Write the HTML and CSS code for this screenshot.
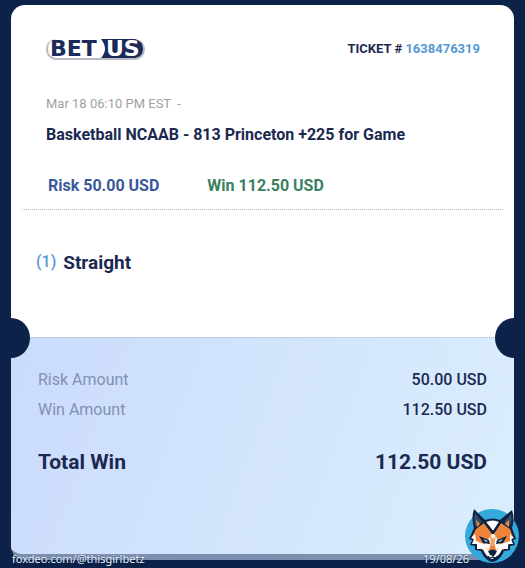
FILE: index.html
```html
<!DOCTYPE html>
<html lang="en">
<head>
<meta charset="utf-8">
<meta name="viewport" content="width=device-width, initial-scale=1">
<title>Ticket 1638476319</title>
<link rel="stylesheet" href="styles.css">
</head>
<body>
<main class="page">
  <article class="ticket">
    <section class="bet">
      <header class="top">
        <svg class="logo" width="100" height="24" viewBox="0 0 100 24" role="img" aria-label="BETUS">
          <path d="M9 2H90Q99 4 99 13Q98 21 90 23H9Q0 21 0 12Q0 4 9 2Z" fill="#b9bcc4"/>
          <path d="M10 2H89Q97 4 97 12Q97 20 89 21H10Q2 20 2 12Q2 4 10 2Z" fill="#fff"/>
          <path d="M55 2H89Q97 4 97 12Q97 20 89 21H55Q63 12 55 2Z" fill="#1b2a58"/>
          <text class="logo-word" x="4" y="19" fill="#1b2a58">BET</text>
          <text class="logo-word" x="60" y="19" fill="#fff">US</text>
        </svg>
        <p class="number">TICKET # <span class="blue">1638476319</span></p>
      </header>
      <p class="date">Mar 18 06:10 PM EST &nbsp;-</p>
      <h1 class="title">Basketball NCAAB - 813 Princeton +225 for Game</h1>
      <p class="stakes"><span class="risk">Risk 50.00 USD</span><span class="win">Win 112.50 USD</span></p>
    </section>
    <section class="kind">
      <span class="count">(1)</span>
      <h2 class="kind-name">Straight</h2>
    </section>
    <section class="summary">
      <dl class="amounts">
        <div class="row"><dt>Risk Amount</dt><dd>50.00 USD</dd></div>
        <div class="row"><dt>Win Amount</dt><dd>112.50 USD</dd></div>
        <div class="row total"><dt>Total Win</dt><dd>112.50 USD</dd></div>
      </dl>
    </section>
  </article>
  <footer class="credit">
    <span>foxdeo.com/@thisgirlbetz</span>
    <span class="stamp">19/08/26</span>
  </footer>
  <svg class="fox" viewBox="0 0 56 56" role="img" aria-label="Fox">
    <circle cx="28" cy="28" r="27" fill="#35a8dc"/>
    <path d="M10 1L21 12Q29 9 36 12L48 2Q51 11 48 20L52 31L49 32L51 37L46 38L46 42L40 43Q38 49 32 53L28 54L25 53Q19 49 17 43L11 42V38L6 37L8 32L5 31L10 20Q7 10 10 1Z" fill="#10213f"/>
    <path d="M11 5L18 14L12 19Q9 12 11 5ZM47 6L40 14L45 19Q49 13 47 6Z" fill="#334d6b"/>
    <path d="M12 12L16 16L13 19ZM45 12L41 16L45 19Z" fill="#ee8a3b"/>
    <path d="M22 14Q29 11 35 14L29 23Z" fill="#fff"/>
    <path d="M20 15L29 27L37 15L46 21L49 29L43 40L36 43L29 49L21 43L15 40L8 29L12 21Z" fill="#ed8439"/>
    <path d="M20 15L22 14L29 23L35 14L37 15L29 27Z" fill="#10213f"/>
    <path d="M11 26L7 30L10 31L8 36L13 36L13 41L19 41Q21 48 28 51Q36 48 38 41L44 41L44 36L49 36L47 31L50 30L46 26L46 33L37 36L33 42H24L20 36L12 33Z" fill="#fff"/>
    <path d="M28 26L24 32L20 37L25 42L27 34H30L32 42L37 37L34 32L30 26Z" fill="#fff"/>
    <path d="M26 27L29 31L32 27L30 38H27Z" fill="#f5a157"/>
    <path d="M15 28L25 32L26 36L19 35ZM43 28L33 32L32 36L39 35Z" fill="#10213f"/>
    <path d="M19 31L24 33L22 34ZM39 31L34 33L36 34Z" fill="#a8dff7"/>
    <path d="M24 43Q29 40 33 43L31 47L29 48L26 47Z" fill="#10213f"/>
    <path d="M29 47V50M24 48Q26 51 29 49Q31 51 34 48" fill="none" stroke="#10213f"/>
  </svg>
</main>
</body>
</html>
```
FILE: styles.css
```css
* {
  box-sizing: border-box;
}

body,
p,
h1,
h2,
dl,
dd {
  margin: 0;
}

body {
  background: #0d2248;
  color: #1b2951;
  font-family: Roboto, "Liberation Sans", sans-serif;
}

.page {
  position: relative;
  display: flex;
  flex-direction: column;
  min-height: 100vh;
  padding: 5px 11px 0;
}

.ticket {
  flex: 1;
  display: flex;
  flex-direction: column;
  overflow: hidden;
  border-radius: 14px;
  border-bottom: 6px solid #7d8fae;
  background: #fff;
}

.bet {
  margin: 0 11px;
  padding: 32px 23px 13px 24px;
  border-bottom: 1px dotted #b4b5b9;
}

.top {
  display: flex;
  justify-content: space-between;
  align-items: center;
}

.logo-word {
  font: bold 22px "DejaVu Sans", sans-serif;
}

.number {
  font-size: 13px;
  font-weight: 700;
  line-height: 24px;
}

.blue,
.count {
  color: #5499d3;
}

.date {
  margin-top: 33px;
  color: #a1a1a3;
  font-size: 13px;
  line-height: 20px;
}

.title {
  margin-top: 11px;
  font-size: 16px;
  font-weight: 700;
  line-height: 20px;
}

.stakes {
  display: flex;
  gap: 48px;
  margin-top: 31px;
  padding-left: 2px;
  font-size: 16px;
  font-weight: 700;
  line-height: 20px;
}

.risk {
  color: #38589b;
}

.win {
  color: #3a805f;
}

.kind {
  display: flex;
  gap: 7px;
  height: 127px;
  padding: 40px 25px;
}

.count {
  font-size: 16px;
  font-weight: 500;
  line-height: 24px;
}

.kind-name {
  font-size: 19px;
  font-weight: 700;
  line-height: 26px;
}

.summary {
  position: relative;
  flex: 1;
  padding: 27px;
  border-top: 1px dotted #b0b8c8;
  background: linear-gradient(110deg, #cbdbfc, #dbeefd);
}

.summary::before,
.summary::after {
  content: "";
  position: absolute;
  top: -20px;
  width: 38px;
  height: 40px;
  border-radius: 50%;
  background: #0d2248;
}

.summary::before {
  left: -19px;
}

.summary::after {
  right: -19px;
}

.row {
  display: flex;
  justify-content: space-between;
  font-size: 16px;
  line-height: 30px;
}

.row dt {
  color: #8290b1;
}

.row dd {
  font-weight: 500;
}

.total {
  margin-top: 22px;
  font-size: 21px;
  font-weight: 700;
}

.total dt {
  color: inherit;
}

.total dd {
  font-weight: 700;
}

.credit {
  display: flex;
  justify-content: space-between;
  margin-top: -9px;
  padding: 0 45px 1px 1px;
  color: #e9f3ff;
  font: 11px/16px "Noto Sans", sans-serif;
  text-shadow: 0 1px 1px #0d2248;
  z-index: 1;
}

.fox {
  position: absolute;
  right: 5px;
  bottom: 4px;
  width: 56px;
  height: 56px;
  z-index: 1;
}
```
